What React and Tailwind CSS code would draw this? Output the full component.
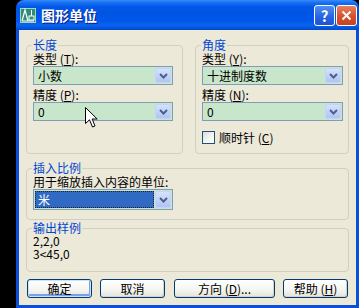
import React from "react";

const font = "font-['Noto_Sans_CJK_SC','Liberation_Sans',sans-serif]";

const Chevron = () => (
  <svg width="9" height="6" viewBox="0 0 9 6">
    <path d="M1 1 L4.5 4.5 L8 1" fill="none" stroke="#4D6185" strokeWidth="2" />
  </svg>
);

const Combo = ({ value, selected }) => (
  <div
    className={`flex ${selected ? "h-[21px]" : "h-[19px]"} border border-[#7F9DB9] bg-[#C8E6C9] p-[1px]`}
  >
    <div
      className={`flex flex-1 items-center pl-[3px] text-[12px] leading-[13px] ${
        selected
          ? "mr-[1px] bg-[#316AC5] text-white outline-1 outline-dotted outline-[#222] -outline-offset-1"
          : "text-black"
      }`}
    >
      {value}
    </div>
    <div className="flex w-[16px] items-center justify-center rounded-[2px] border border-[#C3D3FD] bg-[linear-gradient(180deg,#D6E1FC_0%,#C1D3FB_50%,#B0C4F5_100%)]">
      <Chevron />
    </div>
  </div>
);

const Group = ({ title, className, children }) => (
  <div className={`rounded-[4px] border border-[#D0D0BF] ${className}`}>
    <div className="-mt-[8px] -ml-[1px] mb-[1px] w-fit bg-[#ECE9D8] px-[1px] text-[12px] leading-[13px] text-[#0046D5]">
      {title}
    </div>
    {children}
  </div>
);

const Label = ({ children, className = "" }) => (
  <div className={`text-[12px] leading-[13px] text-black ${className}`}>{children}</div>
);

const Button = ({ children, width, primary, className = "" }) => (
  <div
    className={`flex h-[19px] items-center justify-center rounded-[3px] border border-[#003C74] bg-[linear-gradient(180deg,#FFFFFF_0%,#F4F4F0_60%,#E3E2DA_100%)] text-[12px] leading-[13px] text-black ${width} ${
      primary
        ? "shadow-[inset_0_0_0_1px_#CEE0FB,inset_-1px_-2px_0_1px_#7BA0EA]"
        : "shadow-[inset_-1px_-1px_0_0_#D6D0C5]"
    } ${className}`}
  >
    {children}
  </div>
);

const TitleIcon = () => (
  <svg width="16" height="15" viewBox="0 0 16 15">
    <rect x="0" y="0" width="16" height="15" fill="#2E8C78" />
    <rect x="0.5" y="0.5" width="15" height="14" fill="none" stroke="#9ED8C4" />
    <path d="M2 13 L5 2 L8 13" fill="none" stroke="#fff" strokeWidth="1.2" />
    <path d="M2 13 H14" stroke="#fff" strokeWidth="1" />
    <rect x="9" y="8" width="5" height="4" fill="none" stroke="#fff" strokeWidth="1" />
    <path d="M11.5 2 V8" stroke="#fff" strokeWidth="1" />
  </svg>
);

const Cursor = () => (
  <svg width="13" height="22" viewBox="0 0 13 22" className="absolute left-[85px] top-[107px]">
    <path
      d="M0.5 0.5 L0.5 16.5 L4.5 12.8 L7.5 20 L10 19 L7.2 12 L12.2 12 Z"
      fill="#fff"
      stroke="#000"
      strokeWidth="1"
    />
  </svg>
);

export default function App() {
  return (
    <div className={`relative flex h-[308px] w-[359px] bg-black ${font}`}>
      <div className="w-[16px]" />
      <div className="flex w-[343px] flex-col">
        {/* title bar */}
        <div className="flex h-[30px] items-center rounded-t-[8px] bg-[linear-gradient(180deg,#3A8CF8_0%,#1A72F4_8%,#0258E8_22%,#0054E3_40%,#0057EA_70%,#0A64F2_84%,#0048C8_100%)] pl-[4px] pr-[2px]">
          <div className="mt-[1px]">
            <TitleIcon />
          </div>
          <div className="ml-[5px] text-[14px] font-bold leading-[16px] text-white [text-shadow:1px_1px_0_#0A1E8C]">
            图形单位
          </div>
          <div className="ml-auto flex gap-[1px]">
            <div className="flex h-[21px] w-[21px] items-center justify-center rounded-[3px] border border-white bg-[linear-gradient(180deg,#4F8DF7_0%,#2563E0_60%,#1E52D0_100%)] text-[15px] font-bold leading-none text-white">
              ?
            </div>
            <div className="flex h-[21px] w-[21px] items-center justify-center rounded-[3px] border border-white bg-[linear-gradient(180deg,#E8805F_0%,#D8502C_55%,#C64222_100%)]">
              <svg width="11" height="11" viewBox="0 0 11 11">
                <path d="M1.5 1.5 L9.5 9.5 M9.5 1.5 L1.5 9.5" stroke="#fff" strokeWidth="2" />
              </svg>
            </div>
          </div>
        </div>

        {/* body */}
        <div className="flex flex-1 flex-col border-x-[3px] border-b-[3px] border-[#0B4FD8] bg-[#ECE9D8] pl-[7px] pr-[7px] pt-[15px]">
          <div className="flex gap-[12px]">
            <Group title="长度" className="h-[109px] w-[157px] pl-[6px] pr-[9px]">
              <Label>
                类型 (<u>T</u>):
              </Label>
              <div className="mt-[1px]">
                <Combo value="小数" />
              </div>
              <Label className="mt-[3px]">
                精度 (<u>P</u>):
              </Label>
              <div className="mt-[1px]">
                <Combo value="0" />
              </div>
            </Group>
            <Group title="角度" className="h-[109px] w-[154px] pl-[6px] pr-[5px]">
              <Label>
                类型 (<u>Y</u>):
              </Label>
              <div className="mt-[1px]">
                <Combo value="十进制度数" />
              </div>
              <Label className="mt-[3px]">
                精度 (<u>N</u>):
              </Label>
              <div className="mt-[1px]">
                <Combo value="0" />
              </div>
              <div className="mt-[10px] flex items-center gap-[4px]">
                <div className="h-[13px] w-[13px] border border-[#1C5180] bg-[linear-gradient(135deg,#DCDCD7_0%,#F5F5F2_60%,#FFFFFF_100%)]" />
                <Label>
                  顺时针 (<u>C</u>)
                </Label>
              </div>
            </Group>
          </div>

          <Group title="插入比例" className="mt-[14px] h-[52px] pl-[6px] pr-[175px]">
            <Label>用于缩放插入内容的单位:</Label>
            <div className="mt-[1px]">
              <Combo value="米" selected />
            </div>
          </Group>

          <Group title="输出样例" className="mt-[8px] h-[44px] pl-[6px]">
            <div className="text-[12px] leading-[12px] text-black">2,2,0</div>
            <div className="mt-[1px] text-[12px] leading-[12px] text-black">3&lt;45,0</div>
          </Group>

          <div className="mt-[7px] flex pl-[1px]">
            <Button width="w-[65px]" primary>
              确定
            </Button>
            <Button width="w-[65px]" className="ml-[8px]">
              取消
            </Button>
            <Button width="w-[101px]" className="ml-[9px]">
              方向 (<u>D</u>)...
            </Button>
            <Button width="w-[65px]" className="ml-[8px]">
              帮助 (<u>H</u>)
            </Button>
          </div>
        </div>
      </div>
      <Cursor />
    </div>
  );
}
